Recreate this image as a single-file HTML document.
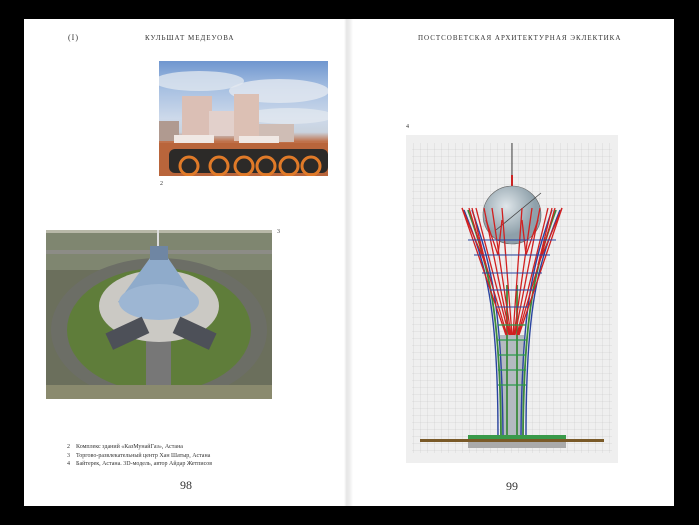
<!DOCTYPE html>
<html><head><meta charset="utf-8"><style>
body{margin:0;width:699px;height:525px;background:#000;position:relative;overflow:hidden;font-family:"Liberation Serif","Noto Serif CJK SC",serif;}
.page{position:absolute;top:19px;left:24px;width:650px;height:487px;background:#fff;}
.gut{position:absolute;top:19px;left:344px;width:9px;height:487px;background:linear-gradient(90deg,#fff,#e6e6e6 30%,#ececec 60%,#fff);}
.t{position:absolute;color:#333;font-size:7px;letter-spacing:1px;white-space:nowrap;}
.s{position:absolute;color:#333;font-size:6px;white-space:nowrap;}
.pn{position:absolute;font-size:12px;color:#333;}
.img1{position:absolute;left:159px;top:61px;width:169px;height:115px;overflow:hidden;background:linear-gradient(#6f96cf 0%,#a9c1e2 25%,#cdd9ea 50%,#c9d3de 62%,#c0714a 70%,#b56a40 100%);}
.img2{position:absolute;left:46px;top:230px;width:226px;height:169px;background:#6b6f5c;overflow:hidden;}
.img3{position:absolute;left:406px;top:135px;width:212px;height:328px;background:#efefef;}
</style></head><body>
<div class="page"></div>
<div class="gut"></div>
<div class="t" style="left:68px;top:33px;font-size:8px">(I)</div>
<div class="t" style="left:145px;top:34px">КУЛЬШАТ МЕДЕУОВА</div>
<div class="t" style="left:418px;top:34px">ПОСТСОВЕТСКАЯ АРХИТЕКТУРНАЯ ЭКЛЕКТИКА</div>

<div class="img1">
<svg width="169" height="115">
<ellipse cx="40" cy="20" rx="45" ry="10" fill="#dfe6ef" opacity=".8"/>
<ellipse cx="120" cy="30" rx="50" ry="12" fill="#e4e9f0" opacity=".8"/>
<ellipse cx="130" cy="55" rx="45" ry="8" fill="#e4e9f0" opacity=".7"/>
<rect x="0" y="60" width="20" height="20" fill="#b09a90"/>
<rect x="23" y="35" width="30" height="45" fill="#dbbfb5"/>
<rect x="50" y="50" width="26" height="25" fill="#e2d0cb"/>
<rect x="75" y="33" width="25" height="47" fill="#dcc0b4"/>
<rect x="100" y="63" width="35" height="18" fill="#cfbdb5"/>
<rect x="15" y="74" width="40" height="8" fill="#f0e8e4"/>
<rect x="80" y="75" width="40" height="7" fill="#f0e8e4"/>
<rect x="0" y="82" width="169" height="33" fill="#b9653b"/>
<g fill="#2c2a28"><rect x="10" y="88" width="159" height="24" rx="6"/></g>
<g fill="none" stroke="#e07a28" stroke-width="3">
<ellipse cx="30" cy="105" rx="9" ry="9"/><ellipse cx="60" cy="105" rx="9" ry="9"/><ellipse cx="85" cy="105" rx="9" ry="9"/><ellipse cx="107" cy="105" rx="9" ry="9"/><ellipse cx="130" cy="105" rx="9" ry="9"/><ellipse cx="152" cy="105" rx="9" ry="9"/></g>
</svg></div>
<div class="s" style="left:160px;top:181px">2</div>

<div class="img2">
<svg width="226" height="169">
<rect width="226" height="40" fill="#7f8670"/>
<rect y="0" width="226" height="3" fill="#b8b8a8"/>
<rect y="20" width="226" height="4" fill="#8c8c86"/>
<ellipse cx="113" cy="100" rx="108" ry="72" fill="#6c6e66"/>
<ellipse cx="113" cy="100" rx="92" ry="62" fill="#5f7d3a"/>
<rect x="100" y="100" width="25" height="69" fill="#777"/>
<ellipse cx="113" cy="76" rx="60" ry="36" fill="#cbc9c4"/>
<path d="M104 28 L72 72 Q113 96 152 72 L122 28 Z" fill="#8fabcb"/>
<ellipse cx="113" cy="72" rx="40" ry="18" fill="#9db6d3"/>
<rect x="104" y="16" width="18" height="14" fill="#6f86a3"/>
<rect x="111" y="0" width="2" height="16" fill="#ddd"/>
<rect x="62" y="95" width="40" height="18" fill="#4d5058" transform="rotate(-25 80 105)"/>
<rect x="128" y="95" width="40" height="18" fill="#4d5058" transform="rotate(25 150 105)"/>
<rect y="155" width="226" height="14" fill="#8a8a6e"/>
</svg></div>
<div class="s" style="left:277px;top:229px">3</div>

<div class="s" style="left:67px;top:443px;line-height:8.5px">2&nbsp;&nbsp;&nbsp;&nbsp;Комплекс зданий «КазМунайГаз», Астана<br>3&nbsp;&nbsp;&nbsp;&nbsp;Торгово-развлекательный центр Хан Шатыр, Астана<br>4&nbsp;&nbsp;&nbsp;&nbsp;Байтерек, Астана. 3D-модель, автор Айдар Жетписов</div>
<div class="pn" style="left:180px;top:478px">98</div>
<div class="pn" style="left:506px;top:479px">99</div>

<div class="s" style="left:406px;top:124px">4</div>
<div class="img3">
<svg width="212" height="328">
<defs><pattern id="g" width="7" height="7" patternUnits="userSpaceOnUse"><path d="M7 0H0V7" fill="none" stroke="#c8c8c8" stroke-width=".6"/></pattern>
<radialGradient id="b" cx=".4" cy=".35"><stop offset="0" stop-color="#dfe6ea"/><stop offset="1" stop-color="#8ea0aa"/></radialGradient></defs>
<rect x="6" y="8" width="200" height="310" fill="url(#g)"/>
<line x1="106" y1="8" x2="106" y2="60" stroke="#444"/>
<line x1="106" y1="40" x2="106" y2="60" stroke="#c22" stroke-width="2"/>
<rect x="94" y="200" width="24" height="100" fill="#b4bac0"/>
<circle cx="106" cy="80" r="29" fill="url(#b)" stroke="#666" stroke-width=".6"/>
<line x1="90" y1="95" x2="135" y2="58" stroke="#444" stroke-width=".8"/>
<g fill="none" stroke="#2a44a0" stroke-width="1.4">
<path d="M58 75 C80 130 92 170 92 300 M154 75 C132 130 120 170 120 300"/>
<path d="M66 75 C85 130 96 170 97 300 M146 75 C127 130 116 170 115 300"/></g>
<g fill="none" stroke="#3c8a3c" stroke-width="1.8">
<path d="M62 75 C84 135 94 180 95 300 M150 75 C128 135 118 180 117 300 M101 150 V300 M111 150 V300"/></g>
<g stroke="#d12020" stroke-width="1.3" fill="none">
<path d="M56 73 L100 200 M63 73 L101 200 M70 73 L103 200 M78 73 L104 200 M86 73 L105 200 M96 73 L106 200 M116 73 L107 200 M126 73 L108 200 M134 73 L109 200 M142 73 L111 200 M149 73 L112 200 M156 73 L113 200"/>
<path d="M56 73 L80 130 L66 73 M156 73 L132 130 L146 73 M80 85 L92 120 L96 85 M132 85 L120 120 L116 85"/></g>
<g stroke="#2a44a0" stroke-width=".9" fill="none">
<path d="M62 105 H150 M68 120 H144 M76 138 H136 M84 155 H128 M90 172 H122"/></g>
<g stroke="#2a9a4a" stroke-width="1.2"><path d="M92 190 H120 M92 205 H120 M92 220 H120 M92 235 H120 M92 250 H120"/></g>
<rect x="62" y="300" width="98" height="5" fill="#3a9a4a"/>
<rect x="14" y="304" width="184" height="3" fill="#7a5a28"/>
<rect x="62" y="307" width="98" height="6" fill="#aaa"/>
</svg></div>
</body></html>
